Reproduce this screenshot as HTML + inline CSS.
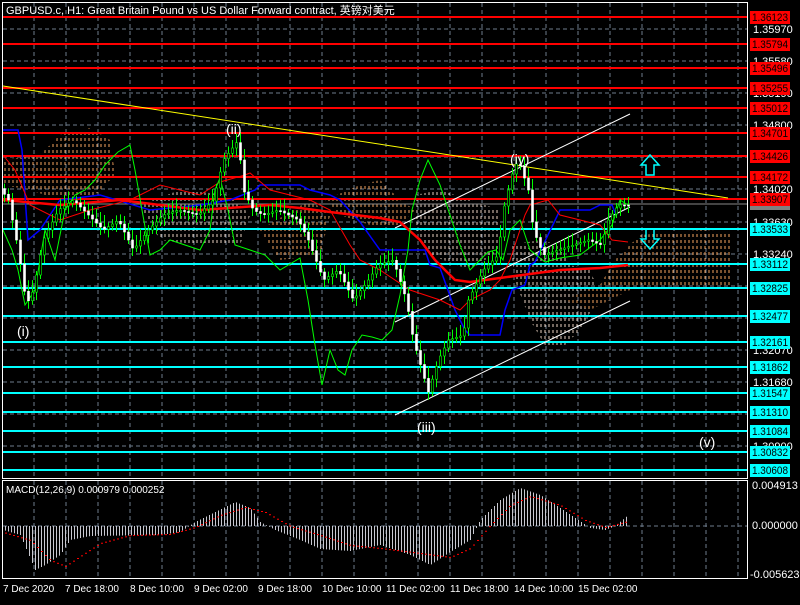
<!DOCTYPE html>
<html><head><meta charset="utf-8"><style>
html,body{margin:0;padding:0;background:#000;}
body{width:800px;height:600px;overflow:hidden;font-family:"Liberation Sans","Noto Sans CJK SC",sans-serif;}
svg text{font-family:"Liberation Sans","Noto Sans CJK SC",sans-serif;}
</style></head><body>
<svg id="s" width="800" height="600" xmlns="http://www.w3.org/2000/svg">
<defs>
<pattern id="cl" width="4" height="6" patternUnits="userSpaceOnUse"><line x1="1" y1="0" x2="1" y2="3" stroke="#f4a460" stroke-width="1"/></pattern>
<pattern id="cl2" width="4" height="6" patternUnits="userSpaceOnUse"><line x1="1" y1="0" x2="1" y2="3" stroke="#e8d0c0" stroke-width="1"/></pattern>
</defs>
<rect width="800" height="600" fill="#000"/>
<g stroke="#6e7c8c" stroke-dasharray="4,3" stroke-width="1">
<line x1="3" y1="29" x2="747" y2="29"/><line x1="3" y1="61" x2="747" y2="61"/><line x1="3" y1="93" x2="747" y2="93"/><line x1="3" y1="125" x2="747" y2="125"/><line x1="3" y1="157" x2="747" y2="157"/><line x1="3" y1="189" x2="747" y2="189"/><line x1="3" y1="222" x2="747" y2="222"/><line x1="3" y1="254" x2="747" y2="254"/><line x1="3" y1="286" x2="747" y2="286"/><line x1="3" y1="318" x2="747" y2="318"/><line x1="3" y1="350" x2="747" y2="350"/><line x1="3" y1="382" x2="747" y2="382"/><line x1="3" y1="414" x2="747" y2="414"/><line x1="3" y1="446" x2="747" y2="446"/>
<line x1="3" y1="526" x2="747" y2="526"/>
</g>
<g id="vgl" stroke="#6e7c8c" stroke-dasharray="4,3"></g>
<path d="M3,160 L40,155 L60,135 L90,128 L110,140 L115,175 L90,200 L60,200 L30,190 L3,185Z" fill="url(#cl)"/>
<path d="M140,205 L180,190 L230,195 L250,215 L240,245 L200,245 L160,240Z" fill="url(#cl2)"/>
<path d="M260,230 L310,200 L330,215 L320,255 L280,260Z" fill="url(#cl)"/>
<path d="M325,200 L360,185 L380,180 L400,200 L415,210 L400,225 L370,225 L340,215Z" fill="url(#cl)"/>
<path d="M415,195 L440,190 L470,200 L500,210 L500,250 L470,270 L430,255 L415,230Z" fill="url(#cl2)"/>
<path d="M510,245 L540,240 L560,245 L570,265 L590,270 L600,295 L580,330 L565,345 L545,345 L530,320 L515,280Z" fill="url(#cl2)"/>
<path d="M565,300 L600,285 L615,260 L640,235 L700,230 L730,232 L730,285 L640,285 L610,300 L590,310Z" fill="url(#cl)"/>
<g stroke="#ff0000" stroke-width="2">
<line x1="3" y1="17" x2="747" y2="17"/><line x1="3" y1="44" x2="747" y2="44"/><line x1="3" y1="68" x2="747" y2="68"/><line x1="3" y1="88" x2="747" y2="88"/><line x1="3" y1="108" x2="747" y2="108"/><line x1="3" y1="133" x2="747" y2="133"/><line x1="3" y1="156" x2="747" y2="156"/><line x1="3" y1="177" x2="747" y2="177"/><line x1="3" y1="199" x2="747" y2="199"/>
</g>
<line x1="3" y1="204" x2="747" y2="204" stroke="#888" stroke-width="1"/>
<g stroke="#00ffff" stroke-width="2">
<line x1="3" y1="229" x2="747" y2="229"/><line x1="3" y1="264" x2="747" y2="264"/><line x1="3" y1="288" x2="747" y2="288"/><line x1="3" y1="316" x2="747" y2="316"/><line x1="3" y1="342" x2="747" y2="342"/><line x1="3" y1="367" x2="747" y2="367"/><line x1="3" y1="393" x2="747" y2="393"/><line x1="3" y1="412" x2="747" y2="412"/><line x1="3" y1="431" x2="747" y2="431"/><line x1="3" y1="452" x2="747" y2="452"/><line x1="3" y1="470" x2="747" y2="470"/>
</g>
<line x1="3" y1="86" x2="728" y2="198" stroke="#ffff00" stroke-width="1"/>
<g stroke="#fff" stroke-width="1">
<line x1="395" y1="228" x2="630" y2="114"/><line x1="395" y1="322" x2="630" y2="207"/><line x1="395" y1="415" x2="630" y2="301"/>
</g>
<polyline fill="none" stroke="#0000ff" stroke-width="1.5" points="3,130 18,130 22,150 28,240 40,230 60,200 100,195 150,210 200,205 230,200 255,190 260,185 300,185 310,190 330,195 340,200 360,222 380,250 400,250 425,250 430,265 440,268 455,310 465,330 470,335 490,335 500,335 505,310 512,290 525,285 530,265 535,262 560,210 590,210 600,205 612,205 616,215"/>
<polyline fill="none" stroke="#ff0000" stroke-width="1" points="3,155 15,170 30,205 60,220 90,210 130,200 160,185 200,195 220,182 245,175 250,173 270,190 310,200 330,210 350,245 360,260 380,270 410,290 440,300 460,310 470,300 490,290 500,280 510,260 525,215 530,205 548,200 560,215 600,225 612,240 628,242"/>
<polyline fill="none" stroke="#ff0000" stroke-width="2.5" points="3,200 60,205 120,200 200,210 270,205 300,208 330,212 380,218 400,222 420,240 435,260 455,280 470,282 500,278 530,274 560,270 600,268 628,265"/>
<polyline fill="none" stroke="#00ff00" stroke-width="1" points="3,230 12,250 18,270 25,305 35,290 45,230 55,260 65,210 75,195 85,190 95,180 105,165 118,152 130,145 135,170 142,210 150,255 160,250 170,240 185,245 200,250 210,230 215,190 220,178 228,210 235,245 250,250 265,255 280,270 300,258 308,300 315,345 322,385 330,350 338,370 345,375 352,350 362,335 372,337 382,340 392,330 400,295 408,250 412,210 420,180 428,160 440,185 450,215 460,245 470,270 478,262 488,252 496,250 503,260 510,230 520,220 530,250 545,262 560,258 580,255 600,240 612,225 620,200 628,205"/>
<g id="cand"></g>
<g fill="#fff" font-size="14">
<text x="17" y="336">(i)</text><text x="226" y="134">(ii)</text><text x="417" y="432">(iii)</text><text x="510" y="164">(iv)</text><text x="699" y="447">(v)</text>
</g>
<path d="M650,155 L659,165 L654,165 L654,175 L646,175 L646,165 L641,165Z" fill="none" stroke="#00ffff" stroke-width="1.5"/>
<path d="M650,249 L659,239 L654,239 L654,229 L646,229 L646,239 L641,239Z" fill="none" stroke="#00ffff" stroke-width="1.5"/>
<rect x="2.5" y="2.5" width="745" height="476" fill="none" stroke="#fff" stroke-width="1"/>
<rect x="2.5" y="480.5" width="745" height="98" fill="none" stroke="#fff" stroke-width="1"/>
<g id="macd"></g>
<text x="6" y="14" fill="#fff" font-size="11">GBPUSD.c, H1:  Great Britain Pound vs US Dollar Forward contract, 英镑对美元</text>
<text x="6" y="493" fill="#fff" font-size="10">MACD(12,26,9) 0.000979 0.000252</text>
<g fill="#fff" font-size="11">
<text x="753" y="33">1.35970</text><text x="753" y="65">1.35580</text><text x="753" y="97">1.35190</text><text x="753" y="129">1.34800</text><text x="753" y="193">1.34020</text><text x="753" y="226">1.33630</text><text x="753" y="258">1.33240</text><text x="753" y="354">1.32070</text><text x="753" y="386">1.31680</text><text x="753" y="450">1.30900</text>
<text x="752" y="489">0.004913</text><text x="752" y="529">0.000000</text><text x="750" y="578">-0.005623</text>
</g>
<g id="lbl" font-size="11"></g>
<g fill="#fff" font-size="10">
<text x="3" y="592">7 Dec 2020</text><text x="65" y="592">7 Dec 18:00</text><text x="130" y="592">8 Dec 10:00</text><text x="194" y="592">9 Dec 02:00</text><text x="258" y="592">9 Dec 18:00</text><text x="322" y="592">10 Dec 10:00</text><text x="386" y="592">11 Dec 02:00</text><text x="450" y="592">11 Dec 18:00</text><text x="514" y="592">14 Dec 10:00</text><text x="578" y="592">15 Dec 02:00</text>
</g>
</svg>
<script>
var NS="http://www.w3.org/2000/svg";
function el(p,t,a){var e=document.createElementNS(NS,t);for(var k in a)e.setAttribute(k,a[k]);p.appendChild(e);return e;}
var vg=document.getElementById('vgl');
for(var x=34;x<747;x+=32){el(vg,'line',{x1:x,y1:3,x2:x,y2:478});el(vg,'line',{x1:x,y1:481,x2:x,y2:578});}
var labs=[[17,'1.36123','#ff0000'],[44,'1.35794','#ff0000'],[68,'1.35496','#ff0000'],[88,'1.35255','#ff0000'],[108,'1.35012','#ff0000'],[133,'1.34701','#ff0000'],[156,'1.34426','#ff0000'],[177,'1.34172','#ff0000'],[199,'1.33907','#ff0000'],[229,'1.33533','#00ffff'],[264,'1.33112','#00ffff'],[288,'1.32825','#00ffff'],[316,'1.32477','#00ffff'],[342,'1.32161','#00ffff'],[367,'1.31862','#00ffff'],[393,'1.31547','#00ffff'],[412,'1.31310','#00ffff'],[431,'1.31084','#00ffff'],[452,'1.30832','#00ffff'],[470,'1.30608','#00ffff']];
var lg=document.getElementById('lbl');
el(lg,'rect',{x:750,y:201,width:40,height:9,fill:'#808080'});
labs.forEach(function(l){el(lg,'rect',{x:750,y:l[0]-6,width:40,height:13,fill:l[2]});var t=el(lg,'text',{x:752,y:l[0]+4,fill:'#000',textLength:36,lengthAdjust:'spacingAndGlyphs'});t.textContent=l[1];});
var pts=[[3,190],[10,200],[20,250],[28,305],[35,290],[45,240],[60,210],[75,200],[90,215],[105,230],[120,220],[135,250],[150,230],[165,215],[180,210],[200,215],[215,200],[225,160],[240,140],[245,190],[255,210],[265,215],[280,210],[300,220],[310,240],[325,280],[340,270],[355,300],[370,280],[380,265],[395,260],[408,300],[415,340],[425,375],[430,392],[440,360],[450,340],[465,335],[470,300],[485,270],[500,255],[505,210],[515,170],[520,160],[530,190],[535,230],[545,255],[560,250],[575,245],[590,240],[603,245],[610,220],[620,205],[628,205]];
function py(x){for(var i=1;i<pts.length;i++){if(x<=pts[i][0]){var a=pts[i-1],b=pts[i];return a[1]+(b[1]-a[1])*(x-a[0])/(b[0]-a[0]);}}return 205;}
var cg=document.getElementById('cand');
for(var x=4;x<=628;x+=4){var o=py(x-2),c=py(x+2);var hi=Math.min(o,c)-4-((x*7)%9),lo=Math.max(o,c)+4+((x*5)%8);
el(cg,'line',{x1:x+0.5,y1:hi,x2:x+0.5,y2:lo,stroke:'#00ff00','stroke-width':1});
var up=c<o;el(cg,'rect',{x:x-0.5,y:Math.min(o,c),width:2,height:Math.max(1,Math.abs(c-o)),fill:up?'#000':'#fff',stroke:up?'#00ff00':'#fff','stroke-width':0.6});}
var mk=[[3,530],[20,535],[35,570],[45,565],[60,555],[70,540],[90,536],[160,535],[180,532],[195,522],[215,512],[235,502],[250,508],[260,522],[275,530],[300,540],[320,549],[350,551],[380,545],[410,555],[430,565],[450,552],[470,540],[480,520],[500,500],[520,488],[540,495],[560,508],[575,518],[590,528],[605,530],[615,526],[628,515]];
var sk=[[3,532],[30,540],[50,560],[65,566],[80,556],[100,543],[130,535],[170,534],[195,527],[220,515],[245,507],[265,512],[290,526],[320,535],[350,545],[380,548],[420,553],[450,557],[470,548],[490,525],[510,505],[530,496],[560,505],[585,520],[605,527],[628,521]];
function iv(k,x){for(var i=1;i<k.length;i++){if(x<=k[i][0]){var a=k[i-1],b=k[i];return a[1]+(b[1]-a[1])*(x-a[0])/(b[0]-a[0]);}}return k[k.length-1][1];}
var mg=document.getElementById('macd');
for(var x=5;x<=628;x+=3){el(mg,'line',{x1:x+0.5,y1:526,x2:x+0.5,y2:iv(mk,x),stroke:'#c8c8d0','stroke-width':1});}
for(var x=5;x<=628;x+=4){var y=iv(sk,x);el(mg,'rect',{x:x,y:y,width:2,height:1,fill:'#ff0000'});}
</script>
</body></html>
